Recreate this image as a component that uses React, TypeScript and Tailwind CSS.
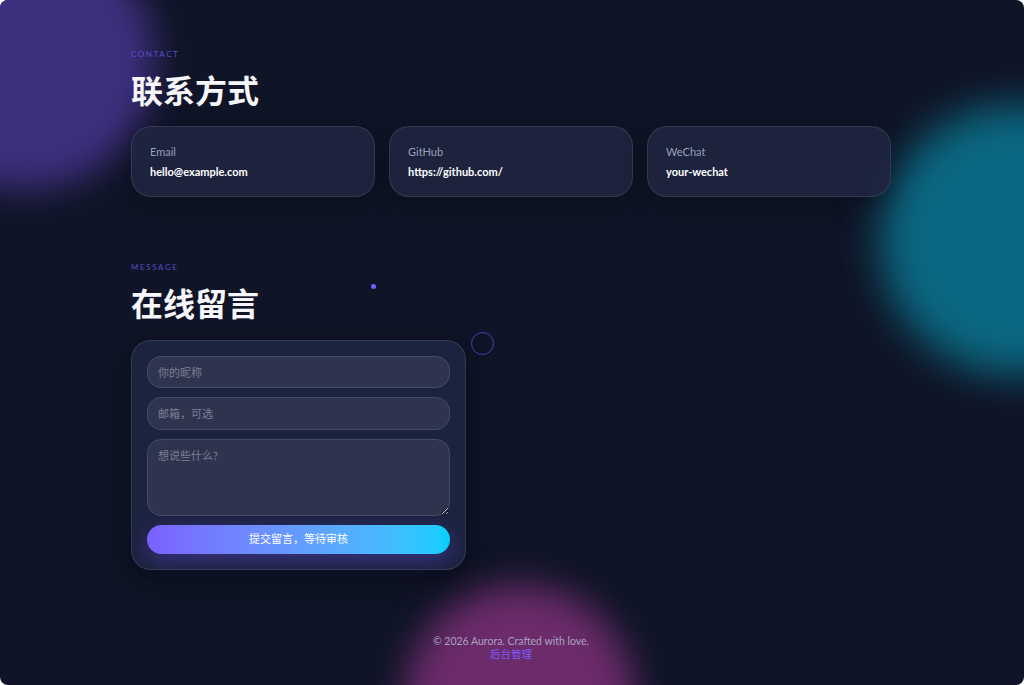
import React from "react";

const contacts = [
  { label: "Email", value: "hello@example.com" },
  { label: "GitHub", value: "https://github.com/" },
  { label: "WeChat", value: "your-wechat" },
];

export default function App() {
  return (
    <div className="bg-white">
      <div
        className="relative h-[685px] overflow-hidden rounded-[8px] bg-[#0f1426] text-white"
        style={{ fontFamily: 'Lato, "Noto Sans CJK SC", sans-serif' }}
      >
        {/* background blobs */}
        <div className="pointer-events-none absolute left-[-105px] top-[-70px] h-[260px] w-[260px] rounded-full bg-[#3e2f7e] blur-[18px]" />
        <div className="pointer-events-none absolute left-[880px] top-[105px] h-[270px] w-[270px] rounded-full bg-[#0b6781] blur-[20px]" />
        <div className="pointer-events-none absolute left-[405px] top-[585px] h-[230px] w-[230px] rounded-full bg-[#6c2b6b] blur-[18px]" />

        {/* cursor decorations */}
        <div className="absolute left-[371px] top-[284px] h-[5px] w-[5px] rounded-full bg-[#7a5cff]" />
        <div className="absolute left-[471px] top-[332px] h-[23px] w-[23px] rounded-full border border-[#4a3cc0]" />

        <main className="relative ml-[131px] w-[760px] pt-[48px]">
          <section>
            <p className="h-[12px] text-[8px] leading-[12px] tracking-[0.2em] text-[#5a4bc8]">CONTACT</p>
            <h2 className="mt-[11px] h-[40px] text-[32px] font-bold leading-[40px] text-[#f5f5fa]">联系方式</h2>
            <div className="mt-[15px] grid grid-cols-3 gap-[14px]">
              {contacts.map((c) => (
                <div
                  key={c.label}
                  className="flex h-[71px] flex-col rounded-[20px] border border-white/10 bg-[#1f2540]/90 px-[18px] pt-[17px] shadow-[0_8px_24px_rgba(0,0,0,0.25)]"
                >
                  <span className="text-[11px] leading-[16px] text-[#98a0ba]">{c.label}</span>
                  <span className="mt-[4px] text-[11px] font-bold leading-[16px] text-white">{c.value}</span>
                </div>
              ))}
            </div>
          </section>

          <section className="mt-[64px]">
            <p className="h-[12px] text-[8px] leading-[12px] tracking-[0.2em] text-[#5a4bc8]">MESSAGE</p>
            <h2 className="mt-[11px] h-[40px] text-[32px] font-bold leading-[40px] text-[#f5f5fa]">在线留言</h2>
            <form className="mt-[16px] flex w-[335px] flex-col gap-[9px] rounded-[20px] border border-white/10 bg-[#1e2440]/95 p-[15px] shadow-[0_10px_30px_rgba(0,0,0,0.35)]">
              <input
                placeholder="你的昵称"
                className="h-[32px] rounded-[14px] border border-[#454a66] bg-[#2f344e] px-[10px] text-[11px] text-white outline-none placeholder:text-[#7b8098]"
              />
              <input
                placeholder="邮箱，可选"
                className="h-[33px] rounded-[14px] border border-[#454a66] bg-[#2f344e] px-[10px] text-[11px] text-white outline-none placeholder:text-[#7b8098]"
              />
              <textarea
                placeholder="想说些什么?"
                className="h-[77px] rounded-[14px] border border-[#454a66] bg-[#2f344e] px-[10px] py-[8px] text-[11px] text-white outline-none placeholder:text-[#7b8098]"
              />
              <button
                type="button"
                className="h-[29px] rounded-full bg-gradient-to-r from-[#7b61ff] to-[#00cfff] text-[11px] text-white shadow-[0_6px_20px_rgba(110,80,255,0.35)]"
              >
                提交留言，等待审核
              </button>
            </form>
          </section>

          <footer className="mt-[65px] flex flex-col items-center text-[10.5px] leading-[13px]">
            <span className="text-[#a9a3c2]">© 2026 Aurora. Crafted with love.</span>
            <a className="text-[#7c5cff]">后台管理</a>
          </footer>
        </main>
      </div>
    </div>
  );
}
